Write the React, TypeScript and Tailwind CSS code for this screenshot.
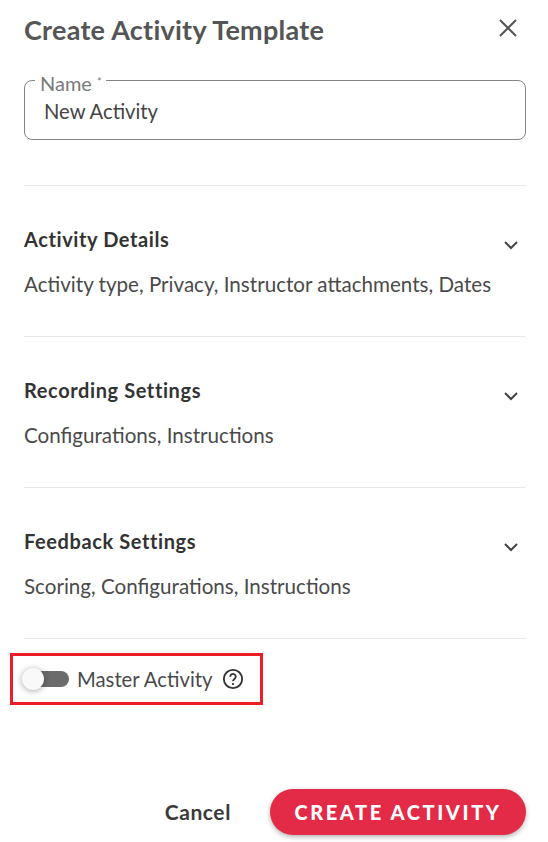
import React from "react";

const font = "font-['Lato','Liberation_Sans',sans-serif]";

function Section({ title, desc }: { title: string; desc: string }) {
  return (
    <section className="h-[151px] border-b border-[#e8e8e8] pt-[39px]">
      <div className="flex items-start justify-between">
        <h3 className="text-[20px] leading-[28px] font-bold tracking-[0.6px] text-[#333333]">{title}</h3>
        <svg className="mt-[12px] mr-[7px]" width="16" height="16" viewBox="0 0 16 16" fill="none">
          <path d="M2 5 L8 11 L14 5" stroke="#444444" strokeWidth="2" />
        </svg>
      </div>
      <p className="mt-[17px] text-[20.6px] leading-[28px] text-[#4a4a4a]">{desc}</p>
    </section>
  );
}

export default function App() {
  return (
    <div className={`${font} h-[842px] w-[548px] overflow-hidden bg-white pl-[24px] pr-[22px]`}>
      {/* header */}
      <div className="flex h-[80px] items-start justify-between pt-[13px]">
        <h1 className="text-[27px] leading-[34px] font-bold tracking-[0.25px] text-[#555555]">Create Activity Template</h1>
        <svg className="mt-[5px] mr-[8px]" width="20" height="20" viewBox="0 0 20 20" fill="none">
          <path d="M2 2 L18 18 M18 2 L2 18" stroke="#555555" strokeWidth="2" />
        </svg>
      </div>

      {/* name field */}
      <div className="relative flex h-[60px] items-center rounded-[8px] border border-[#858585] px-[19px] pt-[1px]">
        <span className="absolute -top-[7px] left-[10px] bg-white pl-[5px] pr-[4px] text-[20px] leading-[18px] text-[#7a7a7a]">
          Name <sup className="text-[11px]">*</sup>
        </span>
        <span className="text-[20.2px] leading-[28px] text-[#444444]">New Activity</span>
      </div>

      <div className="h-[46px] border-b border-[#e8e8e8]" />

      <Section title="Activity Details" desc="Activity type, Privacy, Instructor attachments, Dates" />
      <Section title="Recording Settings" desc="Configurations, Instructions" />
      <Section title="Feedback Settings" desc="Scoring, Configurations, Instructions" />

      {/* master toggle, red annotation box */}
      <div className="mt-[14px] -ml-[14px] flex h-[52px] w-[253px] items-center border-[3px] border-[#ee1c25] pl-[13px]">
        <div className="relative h-[16px] w-[43px] rounded-full bg-[#6b6b6b]">
          <div className="absolute -left-[4px] -top-[3px] h-[22px] w-[22px] rounded-full bg-[#f9f9f9] shadow-[0_1px_6px_rgba(0,0,0,0.35)]" />
        </div>
        <span className="ml-[8px] text-[20.3px] leading-[28px] text-[#4a4a4a]">Master Activity</span>
        <svg className="ml-[10px]" width="22" height="22" viewBox="0 0 24 24" fill="none">
          <circle cx="12" cy="12" r="10" stroke="#333333" strokeWidth="2" />
          <path d="M9 9.5a3 3 0 1 1 4.6 2.5c-1 .7-1.6 1.3-1.6 2.5" stroke="#333333" strokeWidth="2" />
          <circle cx="12" cy="17.5" r="1.2" fill="#333333" />
        </svg>
      </div>

      {/* footer */}
      <div className="mt-[84px] flex items-center justify-end">
        <button className="mr-[39px] text-[21px] leading-[28px] font-bold tracking-[0.6px] text-[#3a3a3a]">Cancel</button>
        <button className="h-[46px] w-[256px] rounded-full bg-[#e32b47] text-[20px] font-black tracking-[2.6px] text-white shadow-[0_2px_5px_rgba(0,0,0,0.3)]">
          CREATE ACTIVITY
        </button>
      </div>
    </div>
  );
}
